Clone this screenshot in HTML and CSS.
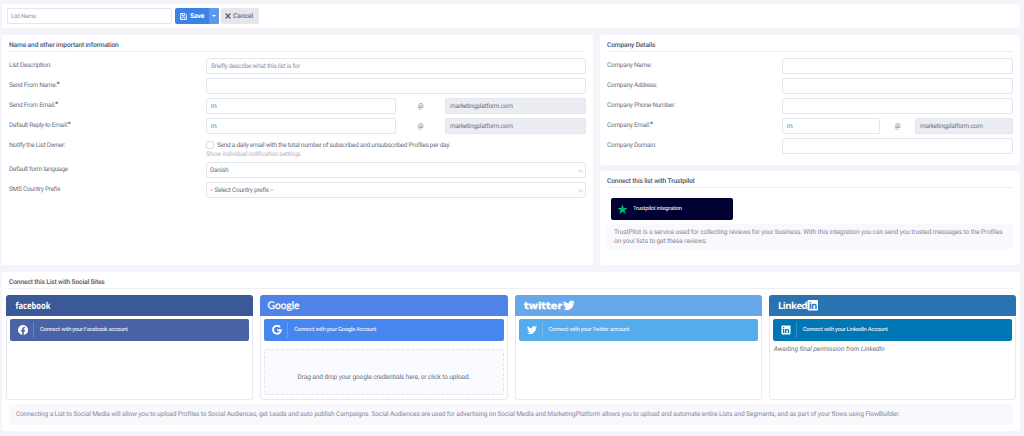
FILE: index.html
```
<!DOCTYPE html>
<html lang="en">
<head>
	<meta charset="UTF-8" />
	<meta name="viewport" content="width=device-width, initial-scale=1" />

	<title>List settings</title>

	<link rel="stylesheet" href="styles.css">
</head>
<body>
	<div class="toolbar">
		<input class="field list_name" type="text" placeholder="List Name" />
		<div class="btn_save">
			<svg width="7" height="7" viewBox="0 0 14 14" fill="none" stroke="#fff" stroke-width="1.6"><path d="M1 1h9l3 3v9H1zM4 1v4h5V1M4 13V8h6v5" /></svg>
			<span>Save</span>
			<i class="caret"></i>
		</div>
		<div class="btn_cancel">
			<svg width="6" height="6" viewBox="0 0 10 10" stroke="#5b5f70" stroke-width="2.3"><path d="M1 1l8 8M9 1L1 9" /></svg>
			<span>Cancel</span>
		</div>
	</div>

	<div class="columns">
		<div class="panel info">
			<h2>Name and other important information</h2>
			<div class="row">
				<label>List Description:</label>
				<input class="field" type="text" placeholder="Briefly describe what this list is for" />
			</div>
			<div class="row">
				<label>Send From Name:<b>*</b></label>
				<input class="field" type="text" />
			</div>
			<div class="row">
				<label>Send From Email:<b>*</b></label>
				<div class="email">
					<input class="field" type="text" value="m" />
					<span>@</span>
					<input class="field" type="text" value="marketingplatform.com" disabled />
				</div>
			</div>
			<div class="row">
				<label>Default Reply-to Email:<b>*</b></label>
				<div class="email">
					<input class="field" type="text" value="m" />
					<span>@</span>
					<input class="field" type="text" value="marketingplatform.com" disabled />
				</div>
			</div>
			<div class="row notify">
				<label>Notify the List Owner:</label>
				<div>
					<div class="check"><i class="box"></i><span>Send a daily email with the total number of subscribed and unsubscribed Profiles per day.</span></div>
					<div class="more">Show individual notification settings</div>
				</div>
			</div>
			<div class="row">
				<label>Default form language</label>
				<div class="field select"><span>Danish</span><svg width="5" height="4" viewBox="0 0 5 4" fill="none" stroke="#aeb1bf" stroke-width=".8"><path d="M.6 1l1.9 1.9L4.4 1" /></svg></div>
			</div>
			<div class="row">
				<label>SMS Country Prefix</label>
				<div class="field select"><span>-- Select Country prefix --</span><svg width="5" height="4" viewBox="0 0 5 4" fill="none" stroke="#aeb1bf" stroke-width=".8"><path d="M.6 1l1.9 1.9L4.4 1" /></svg></div>
			</div>
		</div>

		<div class="side">
			<div class="panel company">
				<h2>Company Details</h2>
				<div class="row">
					<label>Company Name:</label>
					<input class="field" type="text" />
				</div>
				<div class="row">
					<label>Company Address:</label>
					<input class="field" type="text" />
				</div>
				<div class="row">
					<label>Company Phone Number:</label>
					<input class="field" type="text" />
				</div>
				<div class="row">
					<label>Company Email:<b>*</b></label>
					<div class="email">
						<input class="field" type="text" value="m" />
						<span>@</span>
						<input class="field" type="text" value="marketingplatform.com" disabled />
					</div>
				</div>
				<div class="row">
					<label>Company Domain:</label>
					<input class="field" type="text" />
				</div>
			</div>

			<div class="panel trustpilot">
				<h2>Connect this list with Trustpilot</h2>
				<div class="btn_trustpilot">
					<svg width="11" height="11" viewBox="0 0 22 22"><path fill="#00b67a" d="M11 1l2.5 7.1H21l-6 4.5 2.3 7.6L11 15.700l-6.300 4.500L7 12.600 1 8.100h7.500z" /></svg>
					<span>Trustpilot integration</span>
				</div>
				<p class="note">TrustPilot is a service used for collecting reviews for your business. With this integration you can send you trusted messages to the Profiles on your lists to get these reviews.</p>
			</div>
		</div>
	</div>

	<div class="panel social">
		<h2>Connect this List with Social Sites</h2>
		<div class="cards">
			<div class="card facebook">
				<div class="brand">
					<svg width="60" height="20" viewBox="0 0 60 20"><text class="logo_facebook" x="9.500" y="14" textLength="35" lengthAdjust="spacingAndGlyphs">facebook</text></svg>
				</div>
				<div class="connect">
					<svg width="10" height="10" viewBox="0 0 24 24" fill="#fff"><path d="M24 12a12 12 0 1 0-13.900 11.900v-8.400h-3V12h3V9.400c0-3 1.800-4.700 4.500-4.700 1.300 0 2.700.2 2.700.2v3h-1.500c-1.500 0-2 .9-2 1.900V12h3.400l-.6 3.500h-2.800v8.400A12 12 0 0 0 24 12z" /></svg>
					<span>Connect with your Facebook account</span>
				</div>
			</div>
			<div class="card google">
				<div class="brand">
					<svg width="60" height="20" viewBox="0 0 60 20"><text class="logo_google" x="7.500" y="13.500" textLength="32" lengthAdjust="spacingAndGlyphs">Google</text></svg>
				</div>
				<div class="connect">
					<svg width="10" height="10" viewBox="0 0 20 20" fill="none" stroke="#fff" stroke-width="3.600"><path d="M16.300 4.500A8 8 0 1 0 18 10.200h-7.600" /></svg>
					<span>Connect with your Google Account</span>
				</div>
				<div class="dropzone">Drag and drop your google credentials here, or click to upload.</div>
			</div>
			<div class="card twitter">
				<div class="brand">
					<svg width="70" height="20" viewBox="0 0 70 20">
						<text class="logo_twitter" x="9" y="14" textLength="38.500" lengthAdjust="spacingAndGlyphs">twitter</text>
						<path fill="#fff" transform="translate(48 4.500) scale(.49)" d="M24 4.600a10 10 0 0 1-2.800.8 5 5 0 0 0 2.100-2.700 10 10 0 0 1-3.100 1.200 4.900 4.900 0 0 0-8.400 4.500A14 14 0 0 1 1.700 3.200a4.900 4.900 0 0 0 1.500 6.500 5 5 0 0 1-2.200-.6 4.900 4.900 0 0 0 3.900 4.900 5 5 0 0 1-2.200.1 4.900 4.900 0 0 0 4.600 3.400A10 10 0 0 1 0 19.500a14 14 0 0 0 21.500-12.400A10 10 0 0 0 24 4.600z" />
					</svg>
				</div>
				<div class="connect">
					<svg width="10" height="10" viewBox="0 0 24 24" fill="#fff"><path d="M24 4.600a10 10 0 0 1-2.800.8 5 5 0 0 0 2.100-2.700 10 10 0 0 1-3.100 1.200 4.900 4.900 0 0 0-8.400 4.500A14 14 0 0 1 1.700 3.200a4.900 4.900 0 0 0 1.500 6.500 5 5 0 0 1-2.200-.6 4.900 4.900 0 0 0 3.900 4.900 5 5 0 0 1-2.200.1 4.900 4.900 0 0 0 4.600 3.400A10 10 0 0 1 0 19.500a14 14 0 0 0 21.500-12.400A10 10 0 0 0 24 4.600z" /></svg>
					<span>Connect with your Twitter account</span>
				</div>
			</div>
			<div class="card linkedin">
				<div class="brand">
					<svg width="60" height="20" viewBox="0 0 60 20">
						<text class="logo_linkedin" x="9" y="14">Linked</text>
						<rect x="38.500" y="5" width="10.500" height="10.500" rx="1" fill="#fff" />
						<text class="logo_linkedin logo_in" x="39.700" y="14">in</text>
					</svg>
				</div>
				<div class="connect">
					<svg width="10" height="10" viewBox="0 0 20 20"><rect x="1" y="1" width="18" height="18" rx="1.500" fill="#fff" /><path fill="#0077b5" d="M4 8h2.600v8H4zM4 4h2.600v2.500H4zM8.300 8h2.500v1.100c1.500-2.100 5.400-1.700 5.400 2V16h-2.600v-4.300c0-2.200-2.700-2-2.700 0V16H8.300z" /></svg>
					<span>Connect with your LinkedIn Account</span>
				</div>
				<div class="awaiting">Awaiting final permission from LinkedIn</div>
			</div>
		</div>
		<p class="note">Connecting a List to Social Media will allow you to upload Profiles to Social Audiences, get Leads and auto publish Campaigns. Social Audiences are used for advertising on Social Media and MarketingPlatform allows you to upload and automate entire Lists and Segments, and as part of your flows using FlowBuilder.</p>
	</div>
</body>
</html>
```
FILE: styles.css
```
*{
	box-sizing: border-box;
}

body{
	margin: 0;
	padding: 4px 4px 0 2px;
	background-color: #f4f4fa;
	color: #6c7082;
	font-family: Roboto, sans-serif;
	font-size: 6.5px;
	letter-spacing: -.27px;
	line-height: 9px;
	text-rendering: geometricPrecision;
}

input{
	font: inherit;
	color: inherit;
	letter-spacing: inherit;
	margin: 0;
	text-rendering: inherit;
}

.toolbar{
	display: flex;
	align-items: center;
	height: 24px;
	padding-left: 5px;
	background-color: #fff;
	border-radius: 2px;
}

.field{
	display: block;
	width: 100%;
	height: 16px;
	padding: 0 4px;
	border: 1px solid #e3e5ef;
	border-radius: 2px;
	background-color: #fff;
	min-width: 0;
}

.field::placeholder{
	color: #8f93a3;
	opacity: 1;
}

.field:disabled{
	background-color: #ecedf2;
}

.list_name{
	width: 165px;
	padding: 0 3px;
	font-size: 6px;
}

.btn_save,
.btn_cancel{
	display: flex;
	align-items: center;
	height: 16px;
	border-radius: 2px;
	font-weight: 500;
	font-size: 6.8px;
	letter-spacing: -.1px;
}

.btn_save{
	width: 44px;
	margin-left: 3px;
	padding-left: 5px;
	gap: 3px;
	background-color: #3a82e8;
	color: #fff;
	font-weight: 700;
}

.btn_cancel{
	width: 38px;
	margin-left: 2px;
	padding-left: 4px;
	gap: 2px;
	background-color: #e6e7ec;
}

.caret{
	display: flex;
	align-items: center;
	justify-content: center;
	width: 10px;
	height: 16px;
	margin-left: auto;
	border-radius: 0 2px 2px 0;
	background-color: #5b98ee;
}

.caret::after{
	content: "";
	border: 2px solid transparent;
	border-top-color: #fff;
	border-bottom: 0;
}

.columns{
	display: grid;
	grid-template-columns: 591px 420px;
	gap: 7px;
	margin-top: 7px;
}

.panel{
	padding: 5px 7px 0;
	background-color: #fff;
	border-radius: 2px;
}

h2{
	height: 12px;
	margin: 0 0 6px;
	border-bottom: 1px solid #eeeff5;
	color: #50546a;
	font-size: 6.7px;
	font-weight: 500;
	letter-spacing: -.16px;
	line-height: 10px;
}

.side{
	display: flex;
	flex-direction: column;
	gap: 6px;
}

.info{
	height: 230px;
}

.company{
	height: 130px;
}

.trustpilot{
	height: 94px;
}

.row{
	display: grid;
	grid-template-columns: 197px 380px;
	height: 16px;
	margin-bottom: 4px;
}

.row label{
	padding-top: 3px;
}

.row b{
	position: relative;
	top: -1px;
	color: #50546a;
}

.email{
	display: grid;
	grid-template-columns: 190px 49px 141px;
	align-items: center;
	text-align: center;
}

.company .row{
	grid-template-columns: 175px 231px;
}

.company .email{
	grid-template-columns: 98px 35px 98px;
}

.notify{
	height: 20px;
}

.check{
	display: flex;
	align-items: center;
	gap: 3px;
	margin-top: 2px;
	height: 10px;
}

.box{
	width: 8px;
	height: 8px;
	border: 1px solid #d9dbe6;
	border-radius: 2px;
}

.more{
	color: #b4b7c3;
}

.select{
	display: flex;
	align-items: center;
	justify-content: space-between;
	padding: 1px 2px 0 3px;
}

.btn_trustpilot{
	display: flex;
	align-items: center;
	gap: 5px;
	width: 122px;
	height: 22px;
	margin: 10px 0 4px 4px;
	padding-left: 6px;
	border-radius: 2px;
	background-color: #000032;
	color: #fff;
	font-size: 5.8px;
	letter-spacing: -.22px;
}

.note{
	margin: 0;
	padding: 4px 7px 3px;
	border-radius: 2px;
	background-color: #f8f8fd;
	color: #85899a;
	font-size: 6.6px;
	letter-spacing: -.125px;
}

.social{
	height: 159px;
	margin-top: 7px;
}

.cards{
	display: grid;
	grid-template-columns: repeat(4, 1fr);
	gap: 7px;
	margin: 0 -3px 4px;
}

.card{
	height: 105px;
	border: 1px solid #e8eaf3;
	border-radius: 3px;
}

.brand{
	height: 21px;
	margin: -1px -1px 3px;
	border-radius: 3px 3px 0 0;
	letter-spacing: 0;
}

.brand svg{
	display: block;
}

.brand text{
	fill: #fff;
}

.connect{
	display: flex;
	align-items: center;
	height: 22px;
	margin: 0 3px;
	padding-left: 8px;
	border-radius: 2px;
	color: #fff;
	font-size: 5.8px;
	letter-spacing: -.22px;
}

.connect span{
	margin-left: 5px;
	padding-left: 6px;
	border-left: 1px solid #ffffff30;
	line-height: 16px;
}

.facebook .brand{
	background-color: #3b5998;
}

.facebook .connect{
	background-color: #4a62a6;
}

.google .brand{
	background-color: #5083e8;
}

.google .connect{
	background-color: #4786ee;
}

.twitter .brand{
	background-color: #66a8e9;
}

.twitter .connect{
	background-color: #54abee;
}

.linkedin .brand{
	background-color: #2a72b2;
}

.linkedin .connect{
	background-color: #0077b5;
}

.logo_facebook{
	font: 700 9.5px "Open Sans", sans-serif;
}

.logo_google{
	font: 400 10.5px Lato, sans-serif;
	stroke: #fff;
	stroke-width: .3px;
}

.logo_twitter{
	font: 700 9.5px "DejaVu Sans", sans-serif;
	stroke: #fff;
	stroke-width: .3px;
}

.logo_linkedin{
	font: 700 9.5px "Open Sans", sans-serif;
	letter-spacing: -.5px;
}

.brand .logo_in{
	fill: #2a72b2;
}

.dropzone{
	display: flex;
	align-items: center;
	justify-content: center;
	height: 46px;
	margin: 8px 3px 0;
	padding-top: 10px;
	border: 1px dashed #e0e4ee;
	border-radius: 2px;
	background-color: #f9fbff;
	font-size: 6.6px;
	letter-spacing: -.125px;
}

.awaiting{
	margin: 4px 4px 0;
	font-size: 6.6px;
	letter-spacing: -.05px;
	font-style: italic;
}

.social .note{
	padding: 6px 7px;
}
```
